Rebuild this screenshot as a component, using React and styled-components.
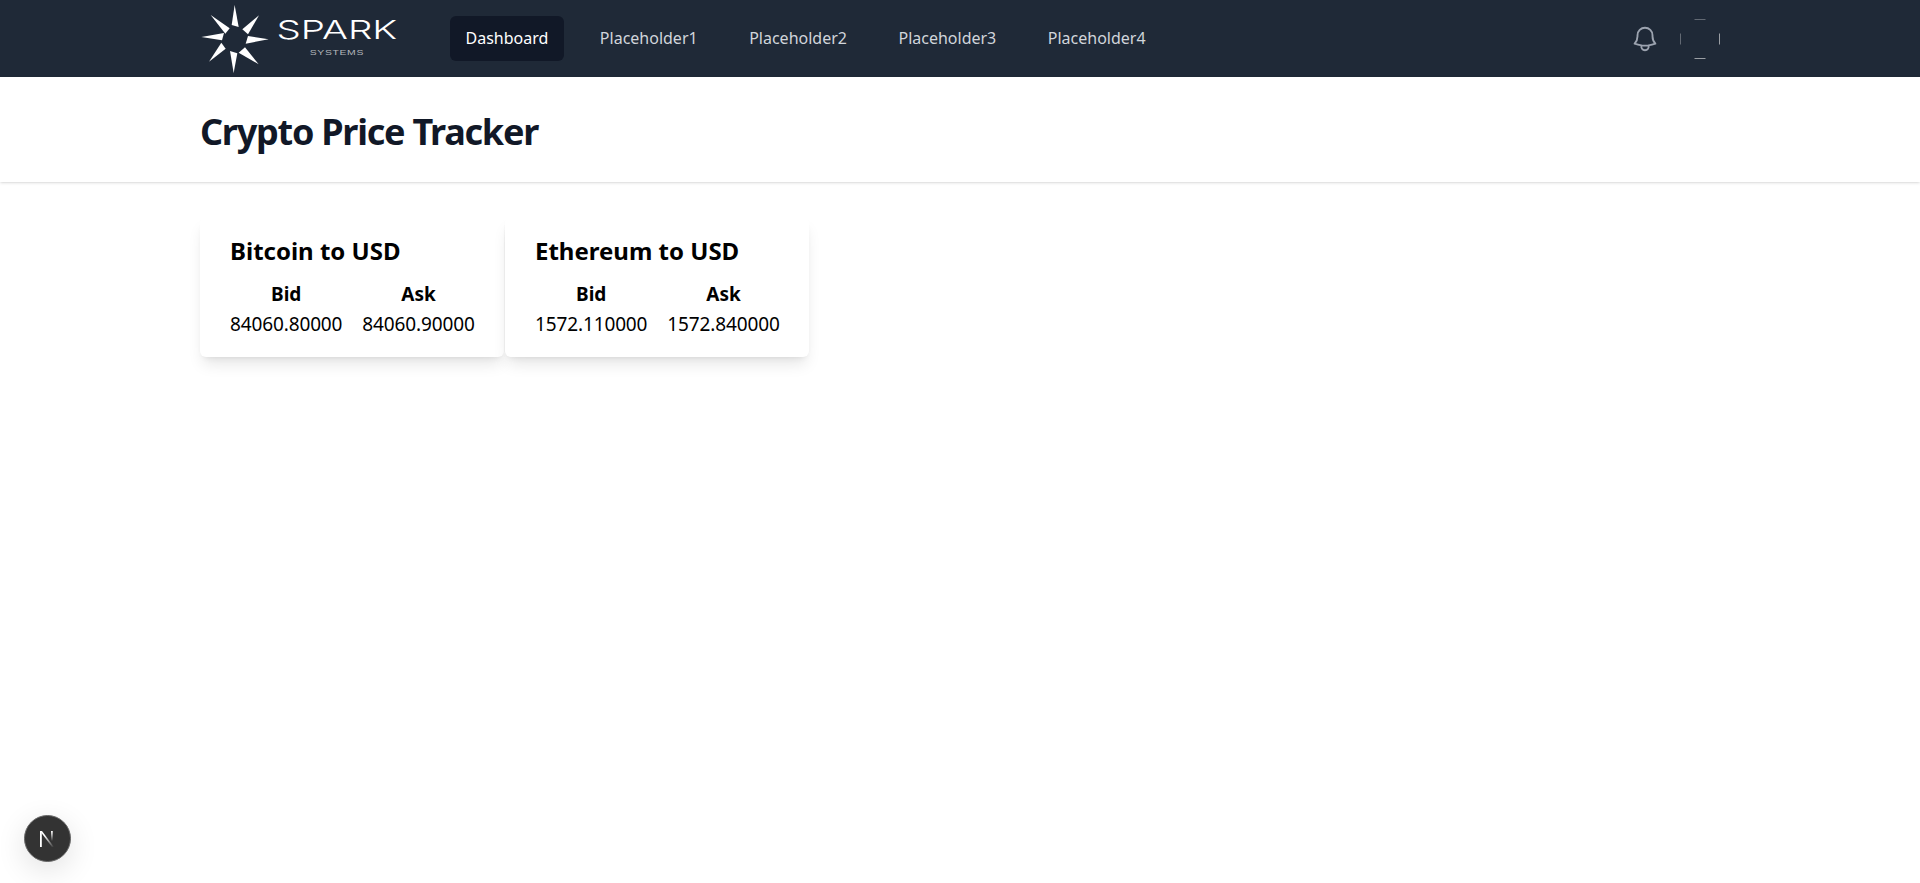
import React from "react";
import styled, { createGlobalStyle } from "styled-components";

const Global = createGlobalStyle`
  html, body { margin: 0; padding: 0; background: #fff; }
  body { font-family: "Noto Sans", "Open Sans", sans-serif; color: #000; }
`;
const Page = styled.div`min-height: 883px; background: #fff; position: relative;`;
const Nav = styled.nav`height: 77px; background: #1f2937;`;
const NavInner = styled.div`
  width: 1520px; margin: 0 auto; height: 100%;
  display: flex; align-items: center;
`;
const Logo = styled.div`display: flex; align-items: center; width: 250px; flex: none;`;
const Wordmark = styled.div`
  margin-left: 7px; margin-top: -3px; display: flex; flex-direction: column; align-items: center; color: #fff; width: 120px;
`;
const Spark = styled.span`
  font-family: "Inter", sans-serif; font-weight: 300; font-size: 26px; line-height: 26px;
  transform: scaleX(1.48);
`;
const Systems = styled.span`
  font-family: "Liberation Sans", sans-serif; font-size: 8px; line-height: 8px; letter-spacing: .5px; color: #b4b7bc;
  margin-top: 6px; transform: scaleX(1.3);
`;
const Links = styled.div`display: flex; gap: 20.5px;`;
const NavLink = styled.a`
  padding: 0 15.5px 2px; height: 45px; box-sizing: border-box; border-radius: 6px; display: flex; align-items: center;
  font-size: 16px; color: ${p => p.$active ? "#fff" : "#d1d5db"}; background: ${p => p.$active ? "#111827" : "transparent"};
`;
const Right = styled.div`margin-left: auto; display: flex; align-items: center; gap: 20px;`;
const Bell = styled.svg`width: 30px; height: 30px; fill: none; stroke: #9ca3af; stroke-width: 1.5; stroke-linecap: round; stroke-linejoin: round; display: block;`;
const Avatar = styled.svg`width: 40px; height: 40px; display: block; fill: none; stroke: #fff; stroke-width: 1;`;
const Header = styled.header`background: #fff; height: 105px; box-shadow: 0 1px 3px rgba(0,0,0,.12), 0 1px 2px -1px rgba(0,0,0,.1);`;
const HeaderInner = styled.div`width: 1520px; margin: 0 auto; height: 100%; display: flex; align-items: center; padding-top: 4px; box-sizing: border-box;`;
const Title = styled.h1`margin: 0; font-size: 36px; line-height: 40px; font-weight: 700; color: #111827; letter-spacing: -1.25px;`;
const Main = styled.main`width: 1520px; margin: 35px auto 0; display: flex; gap: 1.5px;`;
const Card = styled.section`
  width: ${p => p.$w}px; height: 140px; box-sizing: border-box; padding: 18px 0 0 30px; background: #fff; border-radius: 6px;
  box-shadow: 0 10px 15px -3px rgba(0,0,0,.1), 0 4px 6px -4px rgba(0,0,0,.1);
`;
const CardTitle = styled.h2`margin: 0 0 12px; font-size: 24px; line-height: 32px; font-weight: 700; letter-spacing: 0;`;
const Columns = styled.div`display: flex; gap: 20px;`;
const Column = styled.div`display: flex; flex-direction: column; align-items: center;`;
const Label = styled.div`font-size: 19px; line-height: 30px; font-weight: 700;`;
const Value = styled.div`font-size: 19px; line-height: 30px; letter-spacing: -.13px;`;
const Badge = styled.div`
  position: absolute; left: 23.5px; bottom: 21px; width: 47px; height: 47px; border-radius: 50%;
  background: #333; border: 1.5px solid #666; box-sizing: border-box; display: flex; align-items: center; justify-content: center;
  box-shadow: 0 8px 30px rgba(0,0,0,.12);
`;

const Star = () => (
  <svg width="70" height="72" viewBox="6 6 210 216">
    <g fill="#fff">
      <polygon points="110,12 101,72 122,78" />
      <polygon points="183,43 133,85 150,100" />
      <polygon points="212,115 150,105 143,128" />
      <polygon points="182,190 141,139 122,155" />
      <polygon points="107,216 96,150 118,157" />
      <polygon points="33,182 70,125 83,143" />
      <polygon points="10,108 78,96 72,118" />
      <polygon points="38,42 95,82 82,98" />
    </g>
  </svg>
);

const cards = [
  { name: "Bitcoin to USD", bid: "84060.80000", ask: "84060.90000", w: 303.5 },
  { name: "Ethereum to USD", bid: "1572.110000", ask: "1572.840000", w: 304 },
];

export default function App() {
  return (
    <Page>
      <Global />
      <Nav>
        <NavInner>
          <Logo>
            <Star />
            <Wordmark><Spark>SPARK</Spark><Systems>SYSTEMS</Systems></Wordmark>
          </Logo>
          <Links>
            <NavLink $active>Dashboard</NavLink>
            <NavLink>Placeholder1</NavLink>
            <NavLink>Placeholder2</NavLink>
            <NavLink>Placeholder3</NavLink>
            <NavLink>Placeholder4</NavLink>
          </Links>
          <Right>
            <Bell viewBox="0 0 24 24"><path d="M14.857 17.082a23.848 23.848 0 0 0 5.454-1.31A8.967 8.967 0 0 1 18 9.75V9A6 6 0 0 0 6 9v.75a8.967 8.967 0 0 1-2.312 6.022c1.733.64 3.56 1.085 5.455 1.31m5.714 0a24.255 24.255 0 0 1-5.714 0m5.714 0a3 3 0 1 1-5.714 0" /></Bell>
            <Avatar viewBox="0 0 40 40">
              <path d="M14.5 .5h11" opacity=".3" />
              <path d="M14.5 39.5h11" opacity=".55" />
              <path d="M.5 14.5v11" opacity=".3" />
              <path d="M39.5 14.5v11" opacity=".55" />
            </Avatar>
          </Right>
        </NavInner>
      </Nav>
      <Header><HeaderInner><Title>Crypto Price Tracker</Title></HeaderInner></Header>
      <Main>
        {cards.map(c => (
          <Card key={c.name} $w={c.w}>
            <CardTitle>{c.name}</CardTitle>
            <Columns>
              <Column><Label>Bid</Label><Value>{c.bid}</Value></Column>
              <Column><Label>Ask</Label><Value>{c.ask}</Value></Column>
            </Columns>
          </Card>
        ))}
      </Main>
      <Badge>
        <svg width="16" height="16" viewBox="0 0 16 16">
          <defs>
            <linearGradient id="nDiag" x1="0" y1="0" x2="1" y2="1">
              <stop offset=".3" stopColor="#fff" />
              <stop offset="1" stopColor="#fff" stopOpacity="0" />
            </linearGradient>
            <linearGradient id="nStem" x1="0" y1="0" x2="0" y2="1">
              <stop offset="0" stopColor="#fff" />
              <stop offset="1" stopColor="#fff" stopOpacity="0" />
            </linearGradient>
          </defs>
          <rect x="1" y="0" width="1.8" height="16" fill="#fff" />
          <polygon points="1,0 3,0 15,16 13,16" fill="url(#nDiag)" />
          <rect x="12" y="0" width="1.8" height="10" fill="url(#nStem)" />
        </svg>
      </Badge>
    </Page>
  );
}
